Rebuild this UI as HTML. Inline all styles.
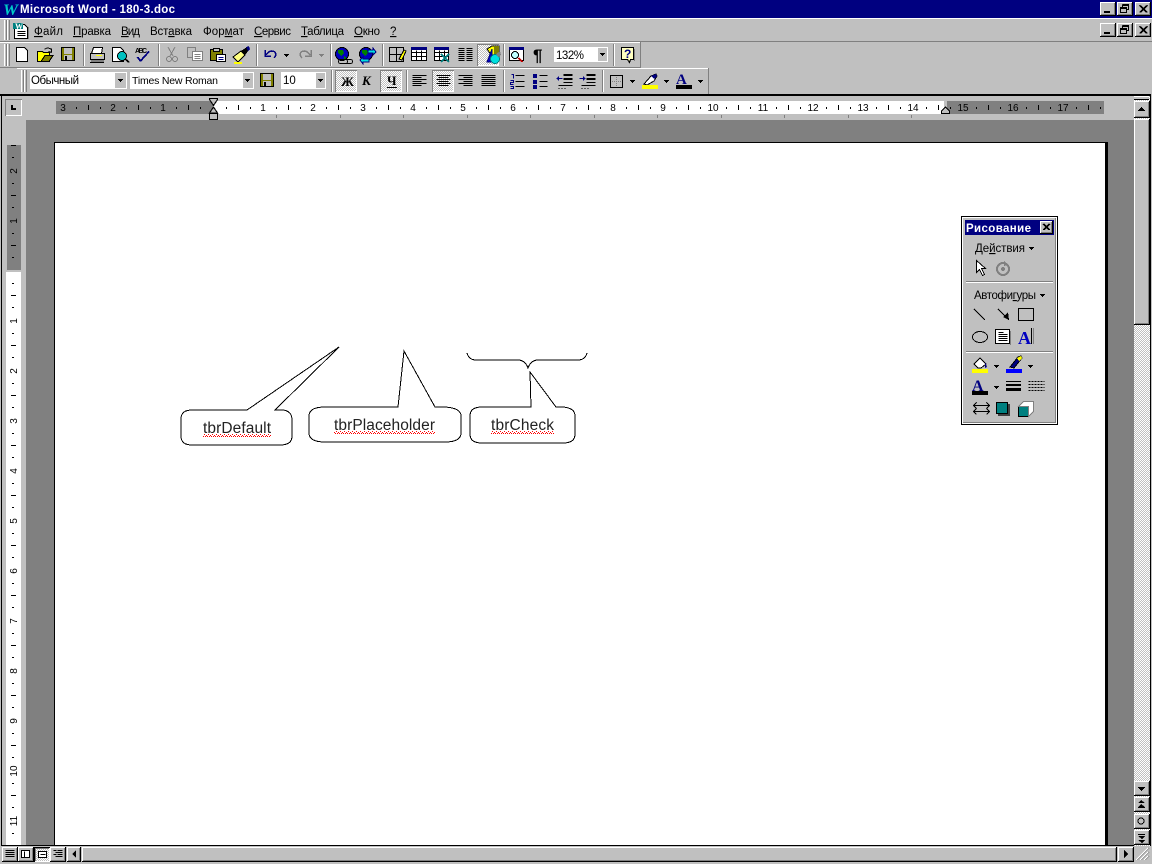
<!DOCTYPE html>
<html><head><meta charset="utf-8"><title>Microsoft Word - 180-3.doc</title>
<style>
html,body{margin:0;padding:0;background:#c0c0c0;width:1152px;height:864px;overflow:hidden}
svg{display:block;shape-rendering:crispEdges}
text{font-family:"Liberation Sans",sans-serif;font-size:11.5px;fill:#000}
.u{text-decoration:underline}
.r{font-size:10px;text-anchor:middle}
.n{fill:none;stroke:#000}
.l{transform:translate(.5px,.5px);fill:none;stroke:#000}
</style></head><body>
<svg width="1152" height="864" viewBox="0 0 1152 864" xmlns="http://www.w3.org/2000/svg">
<defs>
<pattern id="ck" width="2" height="2" patternUnits="userSpaceOnUse"><rect width="2" height="2" fill="#c0c0c0"/><rect width="1" height="1" fill="#fff"/><rect x="1" y="1" width="1" height="1" fill="#fff"/></pattern>
<pattern id="ht" x="213" y="101" width="50" height="13" patternUnits="userSpaceOnUse"><rect x="13" y="6" width="1" height="2"/><rect x="25" y="4" width="1" height="5"/><rect x="37" y="6" width="1" height="2"/></pattern>
<pattern id="vt" x="7" y="270" width="14" height="50" patternUnits="userSpaceOnUse"><rect x="5" y="13" width="2" height="1"/><rect x="4" y="25" width="5" height="1"/><rect x="5" y="37" width="2" height="1"/></pattern>
<pattern id="wv" width="4" height="3" patternUnits="userSpaceOnUse"><rect x="0" y="2" width="1" height="1" fill="#f00"/><rect x="1" y="1" width="1" height="1" fill="#f00"/><rect x="2" y="0" width="1" height="1" fill="#f00"/><rect x="3" y="1" width="1" height="1" fill="#f00"/></pattern>
<g id="wb"><rect width="16" height="14" fill="#000"/><rect width="15" height="13" fill="#fff"/><rect x="1" y="1" width="14" height="12" fill="#808080"/><rect x="1" y="1" width="13" height="11" fill="#c0c0c0"/></g>
<g id="min"><use href="#wb"/><rect x="4" y="9" width="6" height="2" fill="#000"/></g>
<g id="res"><use href="#wb"/><path d="M5.5 2.5h6v5h-2M5.500 3.500h6M5.500 2.500v3M3.500 5.500h6v5h-6zM3.500 6.500h6" class="n"/></g>
<g id="cls"><use href="#wb"/><path d="M4 3l7 7M5 3l7 7M11 3l-7 7M12 3l-7 7" class="l"/></g>
<g id="sb"><rect width="16" height="15" fill="#000"/><rect width="15" height="14" fill="#fff"/><rect x="1" y="1" width="14" height="13" fill="#808080"/><rect x="1" y="1" width="13" height="12" fill="#c0c0c0"/></g>
<g id="dn"><rect x="0" y="0" width="7" height="1"/><rect x="1" y="1" width="5" height="1"/><rect x="2" y="2" width="3" height="1"/><rect x="3" y="3" width="1" height="1"/></g>
<g id="dk"><rect x="0" y="0" width="5" height="1"/><rect x="1" y="1" width="3" height="1"/><rect x="2" y="2" width="1" height="1"/></g>
<g id="gr"><rect x="0" y="0" width="1" height="22" fill="#fff"/><rect x="1" y="0" width="1" height="22" fill="#c0c0c0"/><rect x="2" y="0" width="1" height="22" fill="#808080"/><rect x="3" y="0" width="1" height="22" fill="#fff"/><rect x="4" y="0" width="1" height="22" fill="#c0c0c0"/><rect x="5" y="0" width="1" height="22" fill="#808080"/></g>
<g id="pr"><rect width="22" height="22" fill="#808080"/><rect x="1" y="1" width="21" height="21" fill="#fff"/><rect x="1" y="1" width="20" height="20" fill="url(#ck)"/></g>
<g id="sv"><rect width="14" height="14" fill="#000"/><rect x="1" y="1" width="12" height="12" fill="#808000"/><rect x="3" y="1" width="8" height="6" fill="#c0c0c0"/><rect x="3" y="8" width="8" height="5" fill="#c0c0c0"/><rect x="4" y="9" width="2" height="4" fill="#000"/></g>
</defs>

<!-- base -->
<rect width="1152" height="864" fill="#c0c0c0"/>
<rect width="1152" height="18" fill="#000080"/>
<rect y="18" width="1152" height="1" fill="#fff"/>
<text x="3" y="15" style="font:italic bold 16px 'Liberation Serif',serif;fill:#00c8c8" textLength="15" lengthAdjust="spacingAndGlyphs">W</text>
<text x="20" y="13" style="font-weight:bold;font-size:11.5px;fill:#fff" textLength="155">Microsoft Word - 180-3.doc</text>
<use href="#min" x="1100" y="2"/><use href="#res" x="1117" y="2"/><use href="#cls" x="1135" y="2"/>

<!-- menu -->
<rect y="41" width="1152" height="1" fill="#808080"/>
<rect y="42" width="640" height="1" fill="#fff"/>
<use href="#gr" transform="translate(4,20) scale(1,.9)"/>
<path d="M14.500 24.500h10l3 3v11h-13z" fill="#fff" stroke="#000"/><rect x="28" y="27" width="1" height="12" fill="#808080"/><rect x="13" y="23" width="10" height="6" fill="#008080"/><text x="15" y="29" style="font:bold 8px 'Liberation Serif',serif;fill:#fff">W</text><path d="M17 31h8M17 33h8M17 35h8" class="l"/>
<g>
<text x="34" y="35" textLength="29"><tspan class="u">Ф</tspan>айл</text>
<text x="73" y="35" textLength="38"><tspan class="u">П</tspan>равка</text>
<text x="121" y="35" textLength="19"><tspan class="u">В</tspan>ид</text>
<text x="150" y="35" textLength="42">Вст<tspan class="u">а</tspan>вка</text>
<text x="203" y="35" textLength="41">Фор<tspan class="u">м</tspan>ат</text>
<text x="254" y="35" textLength="37"><tspan class="u">С</tspan>ервис</text>
<text x="301" y="35" textLength="43"><tspan class="u">Т</tspan>аблица</text>
<text x="354" y="35" textLength="26"><tspan class="u">О</tspan>кно</text>
<text x="390" y="35"><tspan class="u">?</tspan></text>
</g>
<use href="#min" x="1100" y="23"/><use href="#res" x="1117" y="23"/><use href="#cls" x="1135" y="23"/>

<!-- toolbar 1 frame -->
<rect x="640" y="42" width="1" height="26" fill="#808080"/>
<rect y="67" width="641" height="1" fill="#808080"/>
<use href="#gr" x="4" y="44"/>
<!-- new -->
<path d="M16.500 47.500h8l3 3v11h-11z" fill="#fff" stroke="#000"/>
<!-- open -->
<path d="M37.500 51.500h5l1 1h6v9h-12z" fill="#ffff00" stroke="#000"/><path d="M41 61.500l4-6h8l-4 6z" fill="#808000" stroke="#000"/><path d="M44.500 49.500q3-3 7 0M51.500 48.500v4M51.500 52.500l-3-1" class="n"/>
<!-- save -->
<g transform="translate(61,47)"><use href="#sv"/></g>
<rect x="83" y="44" width="1" height="22" fill="#808080"/><rect x="84" y="44" width="1" height="22" fill="#fff"/>
<!-- print -->
<path d="M93.500 47.500h9l-1 6h-10z" fill="#fff" stroke="#000"/><path d="M90.500 53.500h14v6h-14z" fill="#c0c0c0" stroke="#000"/><rect x="91" y="60" width="13" height="2" fill="#808080"/><rect x="96" y="55" width="6" height="1" fill="#ff0"/><rect x="90" y="62" width="14" height="1" fill="#000"/>
<!-- preview -->
<path d="M112.500 47.500h8l3 3v11h-11z" fill="#fff" stroke="#000"/><circle cx="122" cy="56" r="4.500" fill="#00c0c0" stroke="#000"/><path d="M125 59l3 3M126 59l3 3" class="l"/>
<!-- spell -->
<text x="135" y="53" style="font-size:7px;font-weight:bold" textLength="12">ABC</text><path d="M137 57l3 4 9-10M138 57l3 4 8-9" stroke="#000080" fill="none"/>
<rect x="158" y="44" width="1" height="22" fill="#808080"/><rect x="159" y="44" width="1" height="22" fill="#fff"/>
<!-- cut -->
<path d="M168 47l5 9M175 47l-5 9" stroke="#808080" fill="none"/><circle cx="169" cy="59" r="2.500" fill="none" stroke="#808080"/><circle cx="175" cy="59" r="2.500" fill="none" stroke="#808080"/>
<!-- copy -->
<path d="M187.500 47.500h8v10h-8z" fill="#c0c0c0" stroke="#808080"/><path d="M192.500 51.500h10v9h-10z" fill="#fff" stroke="#808080"/><path d="M194.500 54.500h6M194.500 56.500h6M194.500 58.500h6" stroke="#808080" fill="none"/>
<!-- paste -->
<path d="M210.500 49.500h12v11h-12z" fill="#808000" stroke="#000"/><path d="M213.500 48.500h6v3h-6z" fill="#c0c0c0" stroke="#000"/><path d="M216.500 54.500h9v7h-9z" fill="#fff" stroke="#000"/><path d="M218.500 57.500h5M218.500 59.500h5" stroke="#000080" fill="none"/>
<!-- format painter -->
<path d="M233 57l8-6 4 4-7 7z" fill="#ffff80" stroke="#000"/><path d="M241 51l6-4 2 3-4 5z" fill="#000"/><path d="M246 47l3-1 1 3-2 2z" fill="#000080"/><rect x="234" y="62" width="8" height="2" fill="#ff0"/>
<rect x="256" y="44" width="1" height="22" fill="#808080"/><rect x="257" y="44" width="1" height="22" fill="#fff"/>
<!-- undo -->
<path d="M265 50v6h6M266 55q4-6 9-3q2 3-1 6" fill="none" stroke="#000080" stroke-width="1.5"/>
<use href="#dk" x="284" y="54"/>
<path d="M311 50v6h-6M310 55q-4-6-9-3q-2 3 1 6" fill="none" stroke="#808080" stroke-width="1.5"/>
<use href="#dk" x="319" y="54" fill="#808080"/>
<rect x="330" y="44" width="1" height="22" fill="#808080"/><rect x="331" y="44" width="1" height="22" fill="#fff"/>
<!-- web -->
<circle cx="342" cy="54" r="6.500" fill="#0000c0" stroke="#000"/><path d="M338 50h5l1 3-3 3-3-3zM344 56l2 2-2 2z" fill="#008000"/><path d="M340.500 59.500h5a2 2 0 0 1 0 4h-5a2 2 0 0 1 0-4zM346.500 59.500h4a2 2 0 0 1 0 4h-4" fill="none" stroke="#000"/>
<circle cx="366" cy="54" r="6.500" fill="#0000c0" stroke="#000"/><path d="M362 50h5l1 3-3 3-3-3z" fill="#008000"/><path d="M368 50h5v-2l3 4-3 3v-2h-5z" fill="#00e0e0" stroke="#000080"/><path d="M360 60l3-3v2h6v3h-6v2z" fill="#00e0e0" stroke="#000080"/>
<rect x="382" y="44" width="1" height="22" fill="#808080"/><rect x="383" y="44" width="1" height="22" fill="#fff"/>
<!-- tables borders -->
<path d="M389.500 47.500h14v14h-14zM389.500 54.500h14M396.500 47.500v14" fill="#c0c0c0" stroke="#000"/><path d="M399 59l5-9 2 1-4 9z" fill="#ff0" stroke="#000"/>
<!-- table -->
<rect x="411.500" y="47.500" width="15" height="13" fill="#fff" stroke="#000"/><rect x="411" y="47" width="16" height="3" fill="#000080"/><path d="M411 52h15M411 56h15M416 50v10M421 50v10" class="l"/>
<!-- excel -->
<rect x="434.500" y="47.500" width="14" height="13" fill="#fff" stroke="#000"/><rect x="434" y="47" width="15" height="3" fill="#000080"/><path d="M434 52h14M434 56h14M439 50v10M444 50v10" class="l"/><path d="M441 54l8 8M449 54l-8 8" stroke="#008080" stroke-width="2"/>
<!-- columns -->
<path d="M458 48h6M458 50h6M458 52h6M458 54h6M458 56h6M458 58h6M458 60h6M466 48h6M466 50h6M466 52h6M466 54h6M466 56h6M466 58h6M466 60h6" class="l"/>
<!-- drawing pressed -->
<use href="#pr" x="477" y="44"/>
<path d="M487 49l5-3h7v10h-7z" fill="#ff0" stroke="#000"/><path d="M494 46h5v10h-5z" fill="#808000"/><path d="M487 62l5-13v13z" fill="#0000c0" stroke="#000080"/><circle cx="495" cy="59" r="4.500" fill="#00e0e0" stroke="#008080"/><path d="M496 54l4-3 1 4-3 2z" fill="#808080"/>
<rect x="503" y="44" width="1" height="22" fill="#808080"/><rect x="504" y="44" width="1" height="22" fill="#fff"/>
<!-- doc map -->
<rect x="509.500" y="47.500" width="14" height="13" fill="#fff" stroke="#000"/><rect x="509" y="47" width="15" height="3" fill="#000080"/><circle cx="515" cy="55" r="3.500" fill="#c0ffff" stroke="#000"/><path d="M518 58l4 4M519 58l4 4" stroke="#c00000"/>
<!-- pilcrow -->
<text x="533" y="61" style="font-size:17px;font-weight:bold" textLength="12">¶</text>
<!-- zoom combo -->
<rect x="554" y="47" width="54" height="15" fill="#fff"/><rect x="598" y="48" width="9" height="13" fill="#c0c0c0"/><use href="#dk" x="600" y="53"/>
<text x="556" y="59" textLength="28">132%</text>
<rect x="613" y="44" width="1" height="22" fill="#808080"/><rect x="614" y="44" width="1" height="22" fill="#fff"/>
<!-- help -->
<path d="M621.500 47.500h12v12h-3l-1 3-2-3h-6z" fill="#ffffc0" stroke="#000"/><rect x="634" y="49" width="1" height="12" fill="#808080"/><text x="624" y="58" style="font-size:12px;font-weight:bold;fill:#000080">?</text>

<!-- toolbar 2 frame -->
<rect x="17" y="68" width="691" height="1" fill="#fff"/>
<rect x="708" y="68" width="1" height="26" fill="#808080"/>
<use href="#gr" x="21" y="70"/>
<rect x="30" y="72" width="97" height="17" fill="#fff"/><rect x="115" y="73" width="11" height="15" fill="#c0c0c0"/><use href="#dk" x="118" y="79"/>
<text x="31" y="84" textLength="48">Обычный</text>
<rect x="130" y="72" width="124" height="17" fill="#fff"/><rect x="243" y="73" width="10" height="15" fill="#c0c0c0"/><use href="#dk" x="245" y="79"/>
<text x="132" y="84" style="font-size:10.500px" textLength="86">Times New Roman</text>
<g transform="translate(260,73)"><use href="#sv"/></g>
<rect x="281" y="72" width="45" height="17" fill="#fff"/><rect x="316" y="73" width="9" height="15" fill="#c0c0c0"/><use href="#dk" x="318" y="79"/>
<text x="283" y="84">10</text>
<rect x="331" y="70" width="1" height="22" fill="#808080"/><rect x="332" y="70" width="1" height="22" fill="#fff"/>
<use href="#pr" x="335" y="70"/><text x="341" y="86" style="font:bold 13px 'Liberation Serif',serif">Ж</text>
<text x="362" y="85" style="font:italic bold 13px 'Liberation Serif',serif">К</text>
<use href="#pr" x="380" y="70"/><text x="387" y="85" style="font:bold 13px 'Liberation Serif',serif">Ч</text><rect x="387" y="87" width="10" height="1" fill="#000"/>
<rect x="406" y="70" width="1" height="22" fill="#808080"/><rect x="407" y="70" width="1" height="22" fill="#fff"/>
<path d="M412 75h14M412 77h9M412 79h14M412 81h9M412 83h14M412 85h9" class="l"/>
<use href="#pr" x="432" y="70"/>
<path d="M436 75h14M438 77h10M436 79h14M438 81h10M436 83h14M438 85h10" class="l"/>
<path d="M458 75h14M463 77h9M458 79h14M463 81h9M458 83h14M463 85h9" class="l"/>
<path d="M481 75h14M481 77h14M481 79h14M481 81h14M481 83h14M481 85h14" class="l"/>
<rect x="503" y="70" width="1" height="22" fill="#808080"/><rect x="504" y="70" width="1" height="22" fill="#fff"/>
<path d="M511.500 74.500h2v4M510.500 80.500h3v2h-3v2h3M510.500 86.500h3v2h-3" stroke="#000080" fill="none"/><path d="M515 75h9M515 81h9M515 86h9" class="l"/>
<rect x="533" y="74" width="4" height="4" fill="#000080"/><rect x="533" y="80" width="4" height="4" fill="#000080"/><rect x="533" y="85" width="4" height="4" fill="#000080"/><path d="M539 75h8M539 81h8M539 86h8" class="l"/>
<path d="M563 74h9M563 75h9M563 78h9M563 79h9M563 82h9M558 85h14" class="l"/><path d="M556 78h6M558 76v4M557 77v2" class="l" style="stroke:#000080"/><path d="M558 88h1M561 88h1M564 88h1" class="l"/>
<path d="M586 74h9M586 75h9M586 78h9M586 79h9M586 82h9M581 85h14" class="l"/><path d="M579 78h6M583 76v4M584 77v2" class="l" style="stroke:#000080"/><path d="M581 88h1M584 88h1M587 88h1" class="l"/>
<rect x="602" y="70" width="1" height="22" fill="#808080"/><rect x="603" y="70" width="1" height="22" fill="#fff"/>
<rect x="610.500" y="75.500" width="12" height="12" fill="none" stroke="#000"/><path d="M616.500 77v9M612 81.500h9" stroke="#808080" stroke-dasharray="1 1" fill="none"/>
<use href="#dk" x="630" y="80"/>
<path d="M644 84l7-8 5-2 1 2-3 5-7 4z" fill="#fff" stroke="#000"/><path d="M651 76l5-2 1 2-3 3z" fill="#000080"/><rect x="642" y="85" width="16" height="4" fill="#ff0"/>
<use href="#dk" x="664" y="80"/>
<text x="676" y="84" style="font:bold 15px 'Liberation Serif',serif;fill:#000080" textLength="16">A</text><rect x="676" y="85" width="16" height="4" fill="#000"/>
<use href="#dk" x="698" y="80"/>

<rect y="94" width="1150" height="2" fill="#000"/>

<!-- ruler -->
<rect x="5" y="99" width="17" height="17" fill="#808080"/><rect x="6" y="100" width="16" height="16" fill="#fff"/><rect x="6" y="100" width="15" height="15" fill="#c0c0c0"/>
<path d="M11 105h2v3h3v2h-5z" fill="#000"/>
<rect x="56" y="101" width="157" height="13" fill="#808080"/><rect x="213" y="101" width="731" height="13" fill="#fff"/><rect x="947" y="101" width="157" height="13" fill="#808080"/>
<rect x="56" y="101" width="1048" height="13" fill="url(#ht)"/>
<g>
<text class="r" x="63" y="111">3</text><text class="r" x="113" y="111">2</text><text class="r" x="163" y="111">1</text>
<text class="r" x="263" y="111">1</text><text class="r" x="313" y="111">2</text><text class="r" x="363" y="111">3</text><text class="r" x="413" y="111">4</text><text class="r" x="463" y="111">5</text><text class="r" x="513" y="111">6</text><text class="r" x="563" y="111">7</text><text class="r" x="613" y="111">8</text><text class="r" x="663" y="111">9</text><text class="r" x="713" y="111">10</text><text class="r" x="763" y="111">11</text><text class="r" x="813" y="111">12</text><text class="r" x="863" y="111">13</text><text class="r" x="913" y="111">14</text><text class="r" x="963" y="111">15</text><text class="r" x="1013" y="111">16</text><text class="r" x="1063" y="111">17</text>
</g>
<path d="M276.500 115v3M340.500 115v3M403.500 115v3M467.500 115v3M530.500 115v3M594.500 115v3M657.500 115v3M721.500 115v3M784.500 115v3M848.500 115v3M911.500 115v3" stroke="#808080" fill="none"/>
<!-- indent markers -->
<path d="M209.500 98.500h8v1l-4 6-4-6z" fill="#c0c0c0" stroke="#000"/><path d="M213.500 107l4 6h-8z" fill="#c0c0c0" stroke="#000"/><rect x="209.500" y="113.500" width="8" height="6" fill="#c0c0c0" stroke="#000"/>
<path d="M945.500 107l4 4v2.500h-8v-2.500z" fill="#c0c0c0" stroke="#000"/>

<!-- left chrome and workspace -->
<rect x="1" y="94" width="1" height="752" fill="#000"/>
<rect x="1150" y="94" width="1" height="752" fill="#000"/>
<rect x="26" y="120" width="1108" height="726" fill="#808080"/>
<rect x="54" y="142" width="1052" height="704" fill="#fff"/>
<rect x="54" y="142" width="1052" height="1" fill="#000"/><rect x="54" y="142" width="1" height="704" fill="#000"/><rect x="1105" y="142" width="3" height="704" fill="#000"/>

<!-- vertical ruler -->
<rect x="7" y="145" width="14" height="125" fill="#808080"/><rect x="6" y="272" width="15" height="574" fill="#fff"/>
<rect x="7" y="145" width="14" height="701" fill="url(#vt)"/>
<g>
<text class="r" transform="translate(17,171) rotate(-90)">2</text>
<text class="r" transform="translate(17,221) rotate(-90)">1</text>
<text class="r" transform="translate(17,321) rotate(-90)">1</text>
<text class="r" transform="translate(17,371) rotate(-90)">2</text>
<text class="r" transform="translate(17,421) rotate(-90)">3</text>
<text class="r" transform="translate(17,471) rotate(-90)">4</text>
<text class="r" transform="translate(17,521) rotate(-90)">5</text>
<text class="r" transform="translate(17,571) rotate(-90)">6</text>
<text class="r" transform="translate(17,621) rotate(-90)">7</text>
<text class="r" transform="translate(17,671) rotate(-90)">8</text>
<text class="r" transform="translate(17,721) rotate(-90)">9</text>
<text class="r" transform="translate(17,771) rotate(-90)">10</text>
<text class="r" transform="translate(17,821) rotate(-90)">11</text>
</g>

<!-- callouts -->
<path d="M247 410L339 347L275 410H283Q292 411 292 420V436Q292 445 280 445H192Q181 445 181 436V419Q181 410 192 410Z" fill="#fff" stroke="#000"/>
<path d="M398 407L404 351L435 407H445Q461 408 461 416V433Q461 442 445 442H325Q309 442 309 433V416Q309 407 325 407Z" fill="#fff" stroke="#000"/>
<path d="M531 407L530 372L556 407H563Q575 408 575 416V434Q575 443 563 443H482Q470 443 470 434V416Q470 407 482 407Z" fill="#fff" stroke="#000"/>
<path d="M467 353Q469 360 476 360H518Q525 360 528 368Q531 360 538 360H578Q585 360 587 353" fill="none" stroke="#000"/>
<text x="203" y="433" style="font-size:15.500px;fill:#222" textLength="68">tbrDefault</text>
<text x="334" y="430" style="font-size:15.500px;fill:#222" textLength="101">tbrPlaceholder</text>
<text x="491" y="430" style="font-size:15.500px;fill:#222" textLength="63">tbrCheck</text>
<rect x="203" y="434" width="68" height="3" fill="url(#wv)"/>
<rect x="334" y="431" width="101" height="3" fill="url(#wv)"/>
<rect x="491" y="431" width="63" height="3" fill="url(#wv)"/>

<!-- drawing toolbar -->
<rect x="961" y="216" width="97" height="209" fill="#000"/><rect x="962" y="217" width="95" height="207" fill="#fff"/><rect x="963" y="218" width="93" height="205" fill="#808080"/><rect x="963" y="218" width="92" height="204" fill="#c0c0c0"/>
<rect x="965" y="220" width="89" height="15" fill="#000080"/>
<text x="966" y="232" style="font-weight:bold;fill:#fff" textLength="65">Рисование</text>
<rect x="1040" y="221" width="13" height="13" fill="#000"/><rect x="1040" y="221" width="12" height="12" fill="#fff"/><rect x="1041" y="222" width="11" height="11" fill="#808080"/><rect x="1041" y="222" width="10" height="10" fill="#c0c0c0"/><path d="M1043 224l6 6M1044 224l6 6M1049 224l-6 6M1050 224l-6 6" stroke="#000"/>
<text x="975" y="252" textLength="50">Де<tspan class="u">й</tspan>ствия</text><use href="#dk" x="1029" y="247"/>
<path d="M976.500 260.500v12l3-3 3 6 2-1-3-6h4z" fill="#fff" stroke="#000"/>
<circle cx="1003" cy="269" r="6" fill="none" stroke="#808080" stroke-width="2"/><circle cx="1003" cy="269" r="2" fill="#808080"/><path d="M1004 261l4 4-4 1z" fill="#808080"/>
<rect x="966" y="281" width="87" height="1" fill="#808080"/><rect x="966" y="282" width="87" height="1" fill="#fff"/>
<text x="974" y="299" textLength="62">Автофи<tspan class="u">г</tspan>уры</text><use href="#dk" x="1040" y="294"/>
<path d="M974 309l11 11" stroke="#000"/>
<path d="M998 309l11 11" stroke="#000"/><path d="M1003 317l5-5 1 8z" fill="#000"/>
<rect x="1018.500" y="308.500" width="15" height="12" fill="none" stroke="#000"/>
<ellipse cx="980" cy="337" rx="7.500" ry="5.500" fill="none" stroke="#000"/>
<rect x="995.500" y="329.500" width="14" height="14" fill="#fff" stroke="#000"/><rect x="1010" y="331" width="1" height="14" fill="#808080"/><path d="M998 332h5M998 334h9M998 336h9M998 338h9M998 340h9" class="l"/>
<text x="1018" y="344" style="font:bold 18px 'Liberation Serif',serif;fill:#0000c0">A</text><rect x="1031" y="328" width="1" height="16" fill="#000"/><rect x="1033" y="328" width="1" height="16" fill="#808080"/>
<rect x="966" y="351" width="87" height="1" fill="#808080"/><rect x="966" y="352" width="87" height="1" fill="#fff"/>
<path d="M974 364l6-6 6 6-5 4h-3z" fill="#fff" stroke="#000"/><path d="M985 362l2 5-2 1z" fill="#000080"/><rect x="972" y="369" width="16" height="4" fill="#ff0"/>
<use href="#dk" x="994" y="365"/>
<path d="M1010 367l8-10 3-1 1 2-8 10z" fill="#000080" stroke="#000"/><path d="M1017 358l4-2 1 2-3 3z" fill="#ff0"/><rect x="1006" y="369" width="16" height="4" fill="#00f"/>
<use href="#dk" x="1028" y="365"/>
<text x="972" y="391" style="font:bold 16px 'Liberation Serif',serif;fill:#000080" textLength="16">A</text><rect x="972" y="391" width="16" height="4" fill="#000"/>
<use href="#dk" x="994" y="386"/>
<rect x="1006" y="381" width="15" height="1" fill="#000"/><rect x="1006" y="384" width="15" height="2" fill="#000"/><rect x="1006" y="388" width="15" height="3" fill="#000"/>
<path d="M1028 381h16M1028 384h16M1028 387h16M1028 390h16" class="l" stroke-dasharray="2 1"/>
<path d="M974 405h14M974 411h14M976 402l-3 3 3 3M986 402l3 3-3 3M976 408l-3 3 3 3M986 408l3 3-3 3" class="l"/>
<rect x="998" y="404" width="12" height="12" fill="#404040"/><rect x="996.500" y="402.500" width="11" height="11" fill="#008080" stroke="#000"/>
<path d="M1018.500 406.500h10v10h-10z" fill="#008080" stroke="#000"/><path d="M1018.500 406.500l5-5h10v10l-5 5v-10z" fill="#fff" stroke="#808080"/>

<!-- vertical scrollbar -->
<rect x="1134" y="96" width="16" height="750" fill="url(#ck)"/>
<rect x="1134" y="96" width="15" height="3" fill="#c0c0c0"/><rect x="1134" y="96" width="15" height="1" fill="#fff"/><rect x="1134" y="99" width="15" height="1" fill="#000"/>
<g transform="translate(1134,101)"><rect width="16" height="17" fill="#000"/><rect width="15" height="16" fill="#fff"/><rect x="1" y="1" width="14" height="15" fill="#808080"/><rect x="1" y="1" width="13" height="14" fill="#c0c0c0"/></g>
<path d="M1141 107h1v1h1v1h1v1h1v1h-7v-1h1v-1h1v-1h1z"/>
<g transform="translate(1134,119)"><rect width="16" height="206" fill="#000"/><rect width="15" height="205" fill="#fff"/><rect x="1" y="1" width="14" height="204" fill="#808080"/><rect x="1" y="1" width="13" height="203" fill="#c0c0c0"/></g>
<use href="#sb" x="1134" y="781"/><use href="#dn" x="1138" y="787"/>
<use href="#sb" x="1134" y="797"/><path d="M1141 800l-3 3h7zM1141 804l-3 3h7z"/><rect x="1138" y="807" width="7" height="1"/>
<use href="#sb" x="1134" y="814"/><circle cx="1141" cy="821" r="3" fill="#c0c0c0" stroke="#000"/>
<use href="#sb" x="1134" y="830"/><rect x="1138" y="834" width="7" height="1"/><path d="M1138 836h7l-3 3zM1138 840h7l-3 3z"/>

<!-- horizontal scroll -->
<rect x="0" y="846" width="1152" height="18" fill="#c0c0c0"/>
<rect x="2" y="845" width="1132" height="1" fill="#000"/>
<g transform="translate(2,847)"><rect width="16" height="15" fill="#000"/><rect width="15" height="14" fill="#fff"/><rect x="1" y="1" width="14" height="13" fill="#808080"/><rect x="1" y="1" width="13" height="12" fill="#c0c0c0"/><path d="M3 3h9M3 5h9M3 7h9M3 9h9" class="l"/></g>
<g transform="translate(18,847)"><rect width="16" height="15" fill="#000"/><rect width="15" height="14" fill="#fff"/><rect x="1" y="1" width="14" height="13" fill="#808080"/><rect x="1" y="1" width="13" height="12" fill="#c0c0c0"/><rect x="3.500" y="3.500" width="8" height="7" fill="#fff" stroke="#000"/><path d="M6 4v6" class="l"/></g>
<g transform="translate(34,847)"><rect width="16" height="15" fill="#000"/><rect x="1" y="1" width="15" height="14" fill="#fff"/><rect x="1" y="1" width="14" height="13" fill="#808080"/><rect x="2" y="2" width="13" height="12" fill="url(#ck)"/><rect x="4.500" y="4.500" width="8" height="6" fill="#fff" stroke="#000"/><path d="M6 7h5" class="l"/></g>
<g transform="translate(50,847)"><rect width="16" height="15" fill="#000"/><rect width="15" height="14" fill="#fff"/><rect x="1" y="1" width="14" height="13" fill="#808080"/><rect x="1" y="1" width="13" height="12" fill="#c0c0c0"/><path d="M3 3h3M7 3h5M5 5h7M3 7h3M7 7h5M5 9h7" class="l"/></g>
<g transform="translate(67,847)"><rect width="14" height="15" fill="#000"/><rect width="13" height="14" fill="#fff"/><rect x="1" y="1" width="12" height="13" fill="#808080"/><rect x="1" y="1" width="11" height="12" fill="#c0c0c0"/><path d="M5 7l4-4v8z"/></g>
<g transform="translate(82,847)"><rect width="1035" height="15" fill="#000"/><rect width="1034" height="14" fill="#fff"/><rect x="1" y="1" width="1033" height="13" fill="#808080"/><rect x="1" y="1" width="1032" height="12" fill="#c0c0c0"/></g>
<g transform="translate(1118,847)"><rect width="16" height="15" fill="#000"/><rect width="15" height="14" fill="#fff"/><rect x="1" y="1" width="14" height="13" fill="#808080"/><rect x="1" y="1" width="13" height="12" fill="#c0c0c0"/><path d="M10 7l-4-4v8z"/></g>
<path d="M1149 848l-12 12M1149 852l-8 8M1149 856l-4 4" stroke="#808080" fill="none"/>
<path d="M1148 848l-12 12M1148 852l-8 8M1148 856l-4 4" stroke="#fff" fill="none"/>
</svg>
</body></html>
